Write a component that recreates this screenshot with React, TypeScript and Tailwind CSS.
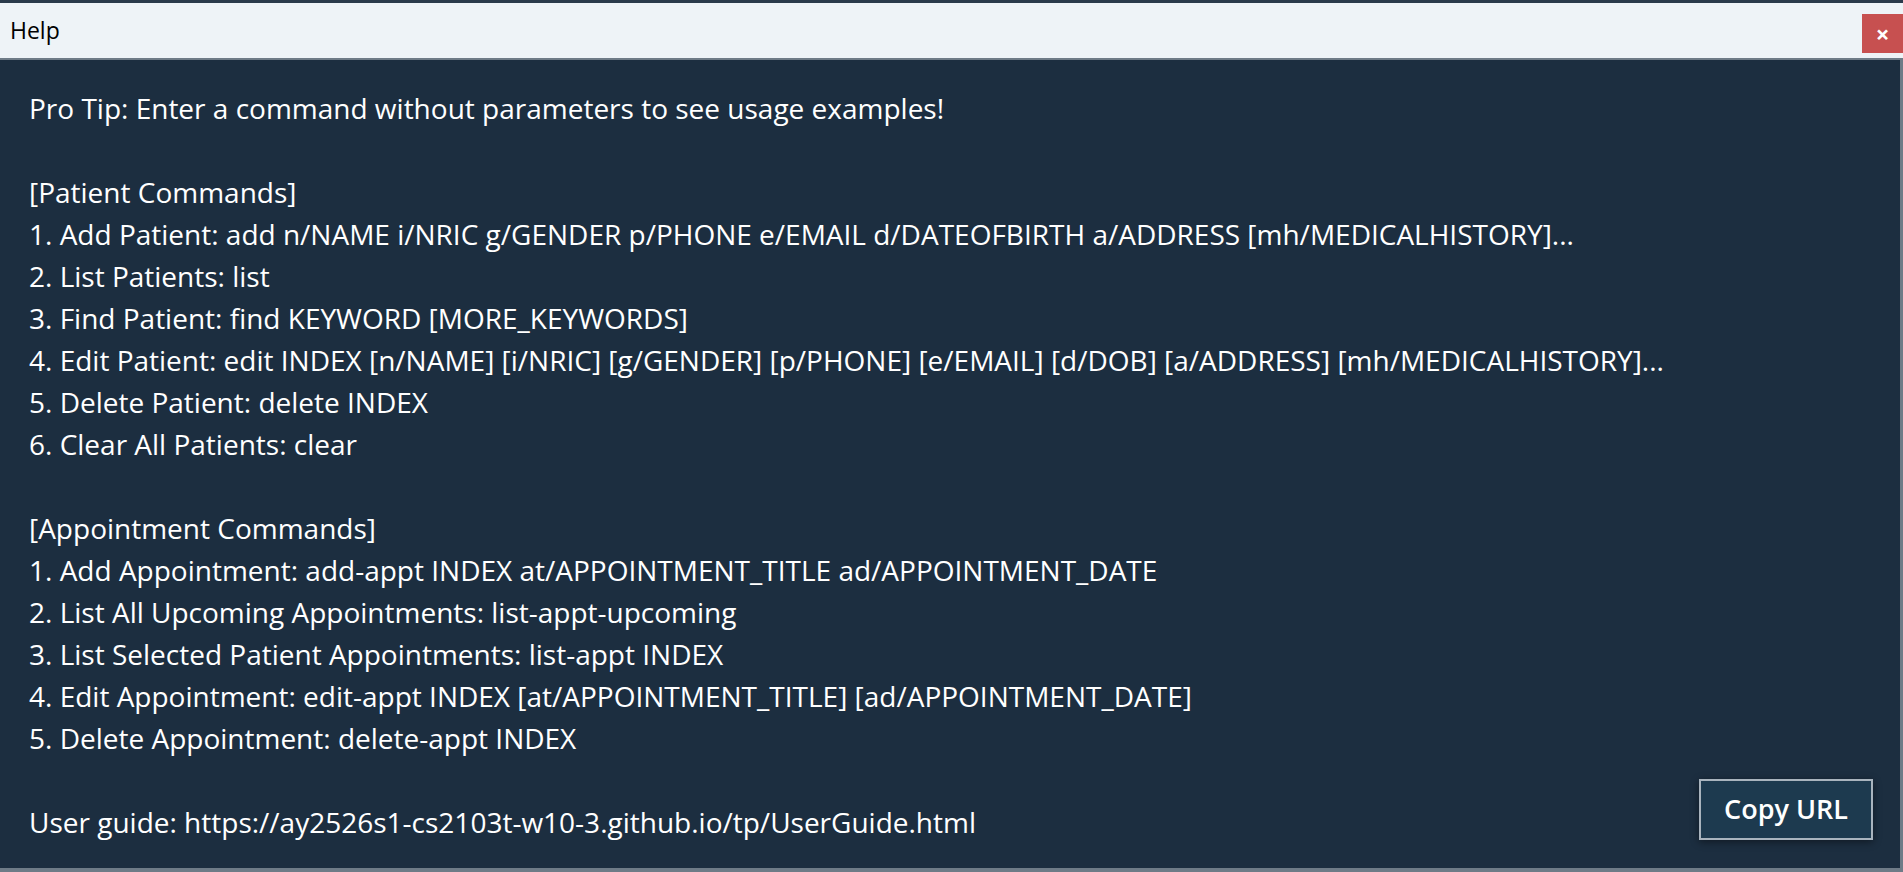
const lines = [
  "Pro Tip: Enter a command without parameters to see usage examples!",
  "",
  "[Patient Commands]",
  "1. Add Patient: add n/NAME i/NRIC g/GENDER p/PHONE e/EMAIL d/DATEOFBIRTH a/ADDRESS [mh/MEDICALHISTORY]...",
  "2. List Patients: list",
  "3. Find Patient: find KEYWORD [MORE_KEYWORDS]",
  "4. Edit Patient: edit INDEX [n/NAME] [i/NRIC] [g/GENDER] [p/PHONE] [e/EMAIL] [d/DOB] [a/ADDRESS] [mh/MEDICALHISTORY]...",
  "5. Delete Patient: delete INDEX",
  "6. Clear All Patients: clear",
  "",
  "[Appointment Commands]",
  "1. Add Appointment: add-appt INDEX at/APPOINTMENT_TITLE ad/APPOINTMENT_DATE",
  "2. List All Upcoming Appointments: list-appt-upcoming",
  "3. List Selected Patient Appointments: list-appt INDEX",
  "4. Edit Appointment: edit-appt INDEX [at/APPOINTMENT_TITLE] [ad/APPOINTMENT_DATE]",
  "5. Delete Appointment: delete-appt INDEX",
  "",
  "User guide: https://ay2526s1-cs2103t-w10-3.github.io/tp/UserGuide.html",
];

export default function App() {
  return (
    <div className="w-[1903px] h-[872px] flex flex-col bg-[#1c2e40] overflow-hidden font-['Open_Sans',sans-serif]">
      {/* strip behind the window */}
      <div className="h-[3px] bg-[#2a3a4b]" />

      {/* Title bar */}
      <div className="h-[55px] bg-[#eef3f7] flex items-start">
        <span className="mt-[10px] ml-[10px] text-[23px] text-black">Help</span>
        <button className="ml-auto mt-[11px] w-[41px] h-[39px] bg-[#c75050] text-white text-[24px] font-bold leading-none flex items-center justify-center">
          ×
        </button>
      </div>
      <div className="h-[2px] bg-[#6e7b87]" />

      {/* Body */}
      <div className="flex-1 flex border-r-[3px] border-b-[4px] border-[#6e7b87]">
        <div className="flex-1 pt-[27px] pl-[29px] text-white text-[28px] leading-[42px]">
          {lines.map((l, i) => (
            <div key={i} className="h-[42px] whitespace-nowrap">
              {l}
            </div>
          ))}
        </div>
        <button className="self-end mb-[28px] mr-[27px] w-[174px] h-[61px] border-2 border-[#a9b4be] bg-[#1d3a4f] text-white text-[27px] font-semibold shadow-[0_2px_8px_rgba(0,0,0,0.45)]">
          Copy URL
        </button>
      </div>
    </div>
  );
}
